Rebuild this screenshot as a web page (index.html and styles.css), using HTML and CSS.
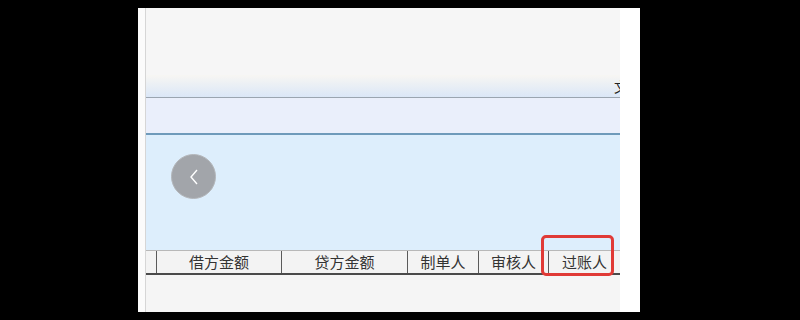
FILE: index.html
```html
<!DOCTYPE html>
<html lang="zh">
<head>
<meta charset="utf-8">
<link rel="stylesheet" href="styles.css">
</head>
<body>
<div class="stage">
  <div class="screen">
    <div class="edge"></div>
    <div class="main">
      <div class="top"></div>
      <div class="ribbon"><span class="cut">文</span></div>
      <div class="bar"></div>
      <div class="panel">
        <button class="back" aria-label="back">
          <svg width="14" height="20" viewBox="0 0 14 20"><path d="M10 3 L4 10 L10 17" fill="none" stroke="#fff" stroke-width="1.4"/></svg>
        </button>
      </div>
      <div class="thead">
        <div class="th c0"></div>
        <div class="th c1">借方金额</div>
        <div class="th c2">贷方金额</div>
        <div class="th c3">制单人</div>
        <div class="th c4">审核人</div>
        <div class="th c5">过账人</div>
      </div>
      <div class="rest"></div>
    </div>
    <div class="side"></div>
    <div class="mark"></div>
  </div>
</div>
</body>
</html>
```
FILE: styles.css
```css
html, body { margin: 0; padding: 0; background: #000; }
body { font-family: "Noto Sans CJK SC", "Noto Sans", sans-serif; }
.stage { width: 800px; height: 320px; padding: 8px 0 0 138px; box-sizing: border-box; }
.screen { position: relative; display: flex; width: 502px; height: 304px; background: #fff; }
.edge { width: 7px; border-right: 1px solid #d6d6d6; background: #fbfbfb; }
.main { width: 474px; display: flex; flex-direction: column; }
.side { flex: 1; background: #fff; }
.top { height: 67px; background: #f6f6f6; }
.ribbon { height: 22px; background: linear-gradient(#f7f6f3, #dbe7f7); border-bottom: 1px solid #9ba5b0; display: flex; justify-content: flex-end; align-items: center; overflow: hidden; }
.cut { font-size: 14px; color: #222; margin-right: -8px; line-height: 14px; }
.bar { height: 35px; background: #eaeffb; border-bottom: 2px solid #6e9aba; }
.panel { height: 115px; background: #ddeefc; padding: 19px 0 0 25px; box-sizing: border-box; }
.back { width: 45px; height: 45px; border-radius: 50%; background: #a2a5aa; border: 1px solid #b4b7bb; display: flex; align-items: center; justify-content: center; padding: 0; }
.thead { height: 22px; display: flex; background: #f3f3f3; border-top: 1px solid #b8b8b8; border-bottom: 2px solid #4a4a4a; box-sizing: content-box; }
.th { font-size: 15px; line-height: 22px; color: #333; text-align: center; border-right: 1px solid #5a5a5a; box-sizing: border-box; }
.c0 { width: 11px; }
.c1 { width: 125px; }
.c2 { width: 126px; }
.c3 { width: 71px; }
.c4 { width: 70px; }
.c5 { width: 71px; border-right: none; }
.rest { flex: 1; background: #f5f5f5; }
.mark { position: absolute; left: 403px; top: 227px; width: 73px; height: 41px; border: 3px solid #e03a36; border-radius: 5px; box-sizing: border-box; }
```
